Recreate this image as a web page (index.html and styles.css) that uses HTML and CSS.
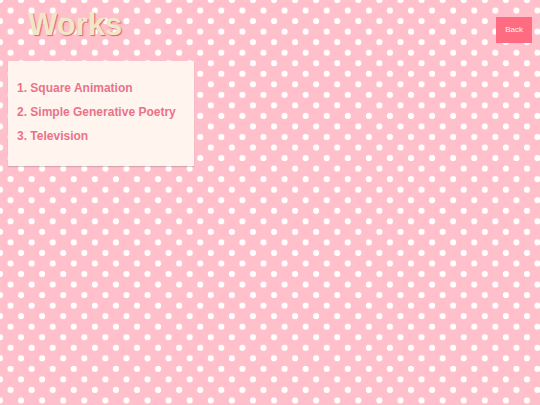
FILE: index.html
```
<!DOCTYPE html>
<html lang="en">

<head>
    <meta charset="UTF-8">
    <meta name="viewport" content="width=device-width, initial-scale=1.0">
    <title>Works</title>
    <link rel="stylesheet" href="styles.css">
</head>

<body>
    <header class="header">
        <h1>Works</h1>
        <button type="button" class="back-button" onclick="history.back()">Back</button>
    </header>

    <main class="works">
        <ol>
            <li><a href="#square-animation">1. Square Animation</a></li>
            <li><a href="#generative-poetry">2. Simple Generative Poetry</a></li>
            <li><a href="#television">3. Television</a></li>
        </ol>
    </main>
</body>

</html>
```
FILE: styles.css
```
body {
    margin: 0;
    padding: 0 8px;
    min-height: 100vh;
    box-sizing: border-box;
    font-family: "Liberation Sans", Arial, sans-serif;
    background-color: #ffc0cb;
    /* Polka dots: one in the middle of each tile, one on its corners */
    background-image:
        radial-gradient(circle, #fff 19%, transparent 23%),
        radial-gradient(circle, #fff 19%, transparent 23%);
    background-size: 3.906vw 3.906vw;
    background-position: 0 0, 1.953vw 1.953vw;
}

.header {
    display: flex;
    justify-content: space-between;
    align-items: flex-start;
    height: 61px;
}

h1 {
    margin: 7px 0 0 20px;
    font-size: 31px;
    line-height: 36px;
    color: #f0e6c8;
    text-shadow: 1px 1px 1px #e0606f;
}

.back-button {
    margin-top: 17px;
    padding: 8px 9px;
    border: none;
    background-color: #ff6b81;
    color: #fff5ee;
    font-family: inherit;
    font-size: 8px;
    line-height: 10px;
    cursor: pointer;
}

.works {
    width: fit-content;
    padding: 15px 18px 18px 9px;
    background-color: #fff5ee;
    box-shadow: 0 1px 1px rgba(0, 0, 0, 0.15);
}

ol {
    margin: 0;
    padding: 0;
    list-style: none;
}

li {
    font-size: 12px;
    font-weight: bold;
    line-height: 24px;
}

a {
    color: #ea7288;
    text-decoration: none;
}
```
